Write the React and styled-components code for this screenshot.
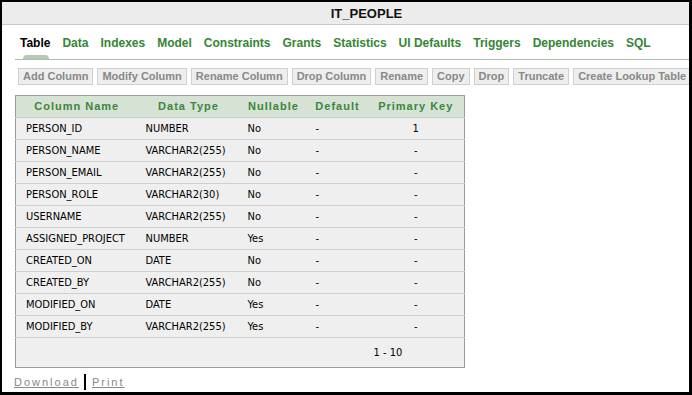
import React from "react";
import styled, { createGlobalStyle } from "styled-components";

const Global = createGlobalStyle`
  html, body { margin: 0; padding: 0; background: #fff; }
  body { font-family: "Liberation Sans", Arial, sans-serif; }
`;

const Frame = styled.div`
  width: 692px;
  height: 395px;
  box-sizing: border-box;
  border-style: solid;
  border-color: #000;
  border-width: 2px 3px 3px 2px;
  background: #fff;
  overflow: hidden;
  display: flex;
  flex-direction: column;
`;

const TitleBar = styled.div`
  height: 22px;
  flex: none;
  background: #ececec;
  border-bottom: 1px solid #c9c9c9;
  display: flex;
  align-items: center;
  justify-content: center;
  padding-left: 42px;
  font-size: 13px;
  font-weight: bold;
  color: #111;
`;

const TabBar = styled.div`
  margin-left: 13px;
  padding: 11px 0 0 5px;
  display: flex;
  gap: 12px;
  border-bottom: 1px solid #a9bea9;
  white-space: nowrap;
`;

const Tab = styled.div`
  position: relative;
  font-size: 12px;
  font-weight: bold;
  line-height: 14px;
  padding-bottom: 9px;
  color: ${(p) => (p.$active ? "#000" : "#358535")};
  &::after {
    content: "";
    display: ${(p) => (p.$active ? "block" : "none")};
    position: absolute;
    left: 3px;
    right: 1px;
    bottom: 0;
    height: 4px;
    border-radius: 4px 4px 0 0;
    background: #b6c9b6;
  }
`;

const Toolbar = styled.div`
  margin: 8px 0 0 16px;
  display: flex;
  gap: 4px;
  white-space: nowrap;
`;

const Button = styled.div`
  flex: none;
  height: 15px;
  line-height: 15px;
  padding: 0 4px;
  border: 1px solid #cfcfcf;
  background: #eeeeee;
  color: #888;
  font-size: 11px;
  font-weight: bold;
`;

const Table = styled.table`
  margin: 10px 0 0 13px;
  width: 449px;
  table-layout: fixed;
  border-collapse: collapse;
  border: 1px solid #9c9c9c;
  background: #efefef;
`;

const Th = styled.th`
  height: 19px;
  padding: 0 0 2px;
  background: #d5e2d4;
  color: #3c863c;
  font-size: 11px;
  font-weight: bold;
  letter-spacing: 1px;
  text-align: center;
  border-bottom: 1px solid #c4cfc4;
`;

const Tr = styled.tr`
  height: 22px;
  border-bottom: 1px solid #cfcfcf;
`;

const Td = styled.td`
  padding: 0 0 0 ${(p) => (p.$center ? 0 : 8)}px;
  text-align: ${(p) => (p.$center ? "center" : "left")};
  font-family: "DejaVu Sans Condensed", "DejaVu Sans", "Liberation Sans", sans-serif;
  font-stretch: condensed;
  font-size: 11px;
  color: #000;
  white-space: nowrap;
  overflow: hidden;
`;

const FirstTd = styled(Td)`
  padding-left: 10px;
`;

const FooterRow = styled.tr`
  height: 30px;
`;

const FooterCell = styled(Td)`
  padding-left: 6px;
`;

const Links = styled.div`
  margin: 6px 0 0 12px;
  display: flex;
  align-items: center;
  font-size: 11px;
  letter-spacing: 2px;
`;

const Link = styled.a`
  color: #888;
  text-decoration: underline;
  cursor: pointer;
`;

const Sep = styled.span`
  display: inline-block;
  width: 2px;
  height: 16px;
  background: #000;
  margin: 0 6px 0 5px;
`;

const tabs = ["Table", "Data", "Indexes", "Model", "Constraints", "Grants", "Statistics", "UI Defaults", "Triggers", "Dependencies", "SQL"];
const buttons = ["Add Column", "Modify Column", "Rename Column", "Drop Column", "Rename", "Copy", "Drop", "Truncate", "Create Lookup Table"];
const rows = [
  ["PERSON_ID", "NUMBER", "No", "-", "1"],
  ["PERSON_NAME", "VARCHAR2(255)", "No", "-", "-"],
  ["PERSON_EMAIL", "VARCHAR2(255)", "No", "-", "-"],
  ["PERSON_ROLE", "VARCHAR2(30)", "No", "-", "-"],
  ["USERNAME", "VARCHAR2(255)", "No", "-", "-"],
  ["ASSIGNED_PROJECT", "NUMBER", "Yes", "-", "-"],
  ["CREATED_ON", "DATE", "No", "-", "-"],
  ["CREATED_BY", "VARCHAR2(255)", "No", "-", "-"],
  ["MODIFIED_ON", "DATE", "Yes", "-", "-"],
  ["MODIFIED_BY", "VARCHAR2(255)", "Yes", "-", "-"],
];

export default function App() {
  return (
    <>
      <Global />
      <Frame>
        <TitleBar>IT_PEOPLE</TitleBar>
        <TabBar>
          {tabs.map((t, i) => (
            <Tab key={t} $active={i === 0}>{t}</Tab>
          ))}
        </TabBar>
        <Toolbar>
          {buttons.map((b) => (
            <Button key={b}>{b}</Button>
          ))}
        </Toolbar>
        <Table>
          <colgroup>
            <col style={{ width: 122 }} />
            <col style={{ width: 102 }} />
            <col style={{ width: 68 }} />
            <col style={{ width: 60 }} />
            <col style={{ width: 97 }} />
          </colgroup>
          <thead>
            <tr>
              <Th>Column Name</Th>
              <Th>Data Type</Th>
              <Th>Nullable</Th>
              <Th>Default</Th>
              <Th>Primary Key</Th>
            </tr>
          </thead>
          <tbody>
            {rows.map((r) => (
              <Tr key={r[0]}>
                <FirstTd>{r[0]}</FirstTd>
                <Td>{r[1]}</Td>
                <Td>{r[2]}</Td>
                <Td>{r[3]}</Td>
                <Td $center>{r[4]}</Td>
              </Tr>
            ))}
            <FooterRow>
              <Td colSpan={4} />
              <FooterCell>1 - 10</FooterCell>
            </FooterRow>
          </tbody>
        </Table>
        <Links>
          <Link>Download</Link>
          <Sep />
          <Link>Print</Link>
        </Links>
      </Frame>
    </>
  );
}
